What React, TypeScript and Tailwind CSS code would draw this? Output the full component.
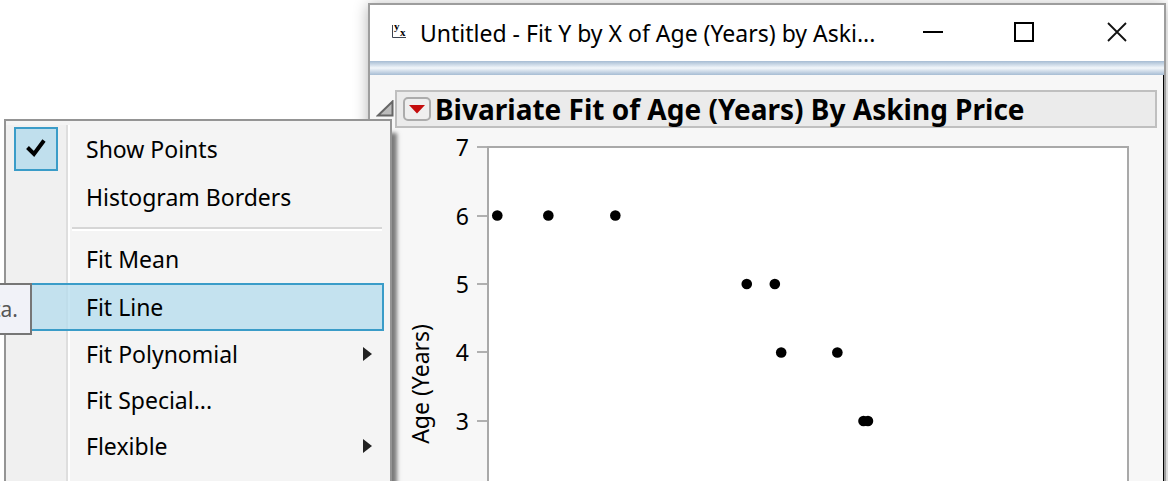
import { Fragment } from "react";

type MenuEntry = {
  label: string;
  checked?: boolean;
  active?: boolean;
  submenu?: boolean;
  compact?: boolean;
  separatorAfter?: boolean;
};

const menuEntries: MenuEntry[] = [
  { label: "Show Points", checked: true },
  { label: "Histogram Borders", separatorAfter: true },
  { label: "Fit Mean" },
  { label: "Fit Line", active: true },
  { label: "Fit Polynomial", submenu: true, compact: true },
  { label: "Fit Special...", compact: true },
  { label: "Flexible", submenu: true, compact: true },
];

const ticks = [7, 6, 5, 4, 3];

// x is a percentage of the plot width, age is in years
const points = [
  { x: 1.3, age: 6 },
  { x: 9.3, age: 6 },
  { x: 19.8, age: 6 },
  { x: 40.4, age: 5 },
  { x: 44.8, age: 5 },
  { x: 45.8, age: 4 },
  { x: 54.6, age: 4 },
  { x: 58.7, age: 3 },
  { x: 59.4, age: 3 },
];

const yearHeight = 68.5;

function TitleBar() {
  return (
    <header className="flex h-14 items-center bg-white pl-[22px] pr-px">
      <svg width="16" height="20" viewBox="0 0 16 20" className="shrink-0 overflow-visible" aria-hidden="true">
        <path d="M0.5 2V14.5H14" fill="none" stroke="#3c4450" />
        <text x="2" y="7" fontFamily="Liberation Serif, serif" fontWeight="700" fontSize="11">
          y
        </text>
        <text x="8" y="13" fontFamily="Liberation Serif, serif" fontWeight="700" fontSize="11">
          x
        </text>
      </svg>
      <h1 className="ml-3 min-w-0 flex-1 truncate text-[23px] leading-8">
        Untitled - Fit Y by X of Age (Years) by Aski...
      </h1>
      <div className="flex h-full shrink-0">
        <button type="button" aria-label="Minimize" className="flex w-[92px] items-center justify-center">
          <svg width="20" height="20" viewBox="0 0 20 20">
            <path d="M0 9H20" stroke="#000" strokeWidth="2" />
          </svg>
        </button>
        <button type="button" aria-label="Maximize" className="flex w-[92px] items-center justify-center">
          <svg width="20" height="20" viewBox="0 0 20 20" className="overflow-visible">
            <rect x="0" y="0" width="18" height="18" fill="none" stroke="#000" strokeWidth="2" />
          </svg>
        </button>
        <button type="button" aria-label="Close" className="flex w-[92px] items-center justify-center">
          <svg width="20" height="20" viewBox="0 0 20 20" className="overflow-visible">
            <path d="M1 0L19 18M19 0L1 18" stroke="#111" strokeWidth="1.8" />
          </svg>
        </button>
      </div>
    </header>
  );
}

function ReportHeading() {
  return (
    <div className="flex items-center pl-[6px] pr-[6px]">
      <button type="button" aria-label="Collapse report" className="shrink-0">
        <svg width="19" height="19" viewBox="0 0 19 19">
          <path d="M2 15.5L16.5 1.5V15.5Z" fill="#bcbcbc" stroke="#666" strokeWidth="2" />
        </svg>
      </button>
      <div className="flex h-[38px] min-w-0 flex-1 items-center border-2 border-[#bfbfbf] bg-[#ebebeb] pl-[6px]">
        <button
          type="button"
          aria-label="Report options"
          className="flex h-6 w-7 shrink-0 items-center justify-center rounded-[5px] border-2 border-[#acacac] bg-[#efefef]"
        >
          <svg width="16" height="9" viewBox="0 0 16 9">
            <path d="M0 0H16L8 8.5Z" fill="#c40d0d" />
          </svg>
        </button>
        <h2 className="ml-1 truncate text-[28px] font-bold leading-9">
          Bivariate Fit of Age (Years) By Asking Price
        </h2>
      </div>
    </div>
  );
}

function Chart() {
  return (
    <figure className="flex pr-[34px]">
      <figcaption className="w-[72px] shrink-0 pl-[34px] pt-[196px]">
        <span className="block rotate-180 text-[23px] leading-8 [writing-mode:vertical-rl]">
          Age (Years)
        </span>
      </figcaption>
      <ol className="-mt-[15px] flex h-[342px] w-[45px] shrink-0 flex-col">
        {ticks.map((tick) => (
          <li key={tick} className="flex flex-1 items-center justify-end gap-2 text-[23px] leading-8">
            {tick}
            <span className="h-[2px] w-[10px] bg-[#b0b0b0]" />
          </li>
        ))}
      </ol>
      <div className="mt-[18px] h-[440px] min-w-0 flex-1 border-2 border-[#a9a9a9] bg-white">
        <svg className="h-full w-full" role="img" aria-label="Age (Years) by Asking Price">
          {points.map((point) => (
            <circle
              key={point.x}
              cx={`${point.x}%`}
              cy={(7 - point.age) * yearHeight - 1}
              r="5.3"
            />
          ))}
        </svg>
      </div>
    </figure>
  );
}

function MenuItem({ entry }: { entry: MenuEntry }) {
  return (
    <button
      type="button"
      role={entry.checked ? "menuitemcheckbox" : "menuitem"}
      aria-checked={entry.checked}
      className={`flex w-full shrink-0 items-center border-2 pr-[10px] text-left text-[23px] leading-8 ${
        entry.compact ? "h-[46px]" : "h-12"
      } ${entry.active ? "border-[#3a9cc8] bg-[#b4dcee]/75" : "border-transparent"}`}
    >
      <span className="w-[72px] shrink-0">
        {entry.checked && (
          <span className="flex size-11 items-center justify-center border-2 border-[#3a9cc8] bg-[#c0dfed]">
            <svg width="20" height="20" viewBox="0 0 20 20" aria-hidden="true">
              <path d="M1.5 8.5L8 15L18 1.5" fill="none" stroke="#000" strokeWidth="4" />
            </svg>
          </span>
        )}
      </span>
      <span className="flex-1">{entry.label}</span>
      {entry.submenu && (
        <svg width="9" height="14" viewBox="0 0 9 14" aria-hidden="true">
          <path d="M0 0L9 7L0 14Z" fill="#222" />
        </svg>
      )}
    </button>
  );
}

function FitMenu() {
  return (
    <div className="absolute bottom-0 left-1 top-[119px] w-[388px] border-2 border-b-0 border-[#949494] bg-[#f4f4f4] shadow-[5px_14px_4px_rgba(0,0,0,0.5)]">
      <div className="flex h-full">
        <div className="mt-1 w-[62px] border-r-2 border-[#dedede] bg-[#f0f0f0]" />
        <div className="mt-1 w-[2px] bg-white" />
      </div>
      <div role="menu" className="absolute inset-0 overflow-hidden px-[6px] pt-1">
        {menuEntries.map((entry) => (
          <Fragment key={entry.label}>
            <MenuItem entry={entry} />
            {entry.separatorAfter && (
              <div role="separator" className="ml-[60px] mr-[2px] h-[14px] pt-[6px]">
                <div className="h-1 border-b-2 border-t-2 border-b-white border-t-[#d6d6d6]" />
              </div>
            )}
          </Fragment>
        ))}
      </div>
    </div>
  );
}

export default function App() {
  return (
    <main className="relative h-screen overflow-hidden bg-white font-['Noto_Sans','Open_Sans',sans-serif] text-black">
      <section className="ml-[368px] mr-[2px] mt-[3px] border-2 border-[#9d9d9d] shadow-[0_2px_14px_rgba(0,0,0,0.3)]">
        <TitleBar />
        <div className="h-[14px] bg-linear-to-b from-[#a6bcd3] via-[#f3f7fb] to-[#a6bcd3]" />
        <div className="border-r border-black bg-[#f7f7f7] pt-[15px]">
          <ReportHeading />
          <Chart />
        </div>
      </section>
      <FitMenu />
      <div
        role="tooltip"
        className="absolute left-0 top-[283px] flex h-[52px] w-8 items-center justify-end overflow-hidden border-2 border-l-0 border-[#767676] bg-[#f1f2f8] pr-3 text-[21px] leading-8 text-[#575757]"
      >
        ta.
      </div>
    </main>
  );
}
